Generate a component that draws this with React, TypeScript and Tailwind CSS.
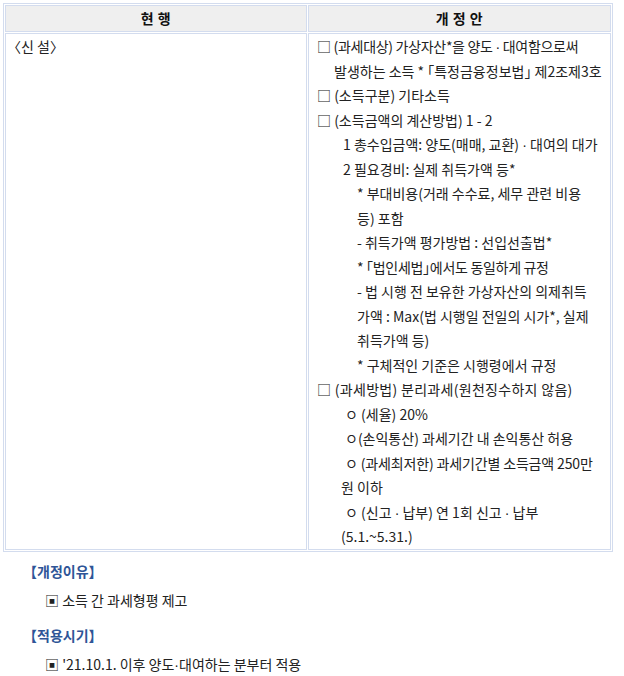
import React from "react";

// half-width punctuation so 「」〈〉【】 sit tight like the source document
function P({ c }: { c: string }) {
  return <span className="[font-feature-settings:'halt']">{c}</span>;
}

function Dot() {
  return <span className="font-['Liberation_Sans',sans-serif] leading-none">·</span>;
}

const lines: { node: React.ReactNode; indent: number; track?: string }[] = [
  { node: <>□ (과세대상) 가상자산*을 양도 <Dot /> 대여함으로써</>, indent: 0, track: "tracking-[-0.3px]" },
  { node: <>발생하는 소득 * <P c="「" />특정금융정보법<P c="」" /> 제2조제3호</>, indent: 17 },
  { node: "□ (소득구분) 기타소득", indent: 0 },
  { node: "□ (소득금액의 계산방법) 1 - 2", indent: 0 },
  { node: <>1 총수입금액: 양도(매매, 교환) <Dot /> 대여의 대가</>, indent: 26 },
  { node: "2 필요경비: 실제 취득가액 등*", indent: 26 },
  { node: "* 부대비용(거래 수수료, 세무 관련 비용", indent: 40 },
  { node: "등) 포함", indent: 40 },
  { node: "- 취득가액 평가방법 : 선입선출법*", indent: 40 },
  { node: <>* <P c="「" />법인세법<P c="」" />에서도 동일하게 규정</>, indent: 40, track: "tracking-[-0.3px]" },
  { node: "- 법 시행 전 보유한 가상자산의 의제취득", indent: 40 },
  { node: "가액 : Max(법 시행일 전일의 시가*, 실제", indent: 40 },
  { node: "취득가액 등)", indent: 40 },
  { node: "* 구체적인 기준은 시행령에서 규정", indent: 40 },
  { node: "□ (과세방법) 분리과세(원천징수하지 않음)", indent: 0, track: "tracking-[0.3px]" },
  { node: "ㅇ (세율) 20%", indent: 28 },
  { node: "ㅇ(손익통산) 과세기간 내 손익통산 허용", indent: 28 },
  { node: "ㅇ (과세최저한) 과세기간별 소득금액 250만", indent: 28, track: "tracking-[-0.15px]" },
  { node: "원 이하", indent: 24 },
  { node: <>ㅇ (신고 <Dot /> 납부) 연 1회 신고 <Dot /> 납부</>, indent: 28 },
  { node: "(5.1.~5.31.)", indent: 24 },
];

export default function App() {
  return (
    <div className="min-h-screen bg-white text-[#222] font-['Noto_Sans_CJK_KR',sans-serif] text-[14px]">
      <table className="ml-[3px] mt-[3px] w-[610px] border border-[#d3dcee] border-separate border-spacing-[1px]">
        <thead>
          <tr>
            <th className="h-[27px] w-[302px] border border-[#d3dcee] bg-[#efefef] p-0 font-bold text-[14px] text-[#111] tracking-[0.5px]">
              현 행
            </th>
            <th className="h-[27px] border border-[#d3dcee] bg-[#efefef] p-0 font-bold text-[14px] text-[#111] tracking-[0.5px]">
              개 정 안
            </th>
          </tr>
        </thead>
        <tbody>
          <tr>
            <td className="h-[514px] align-top border border-[#d3dcee] pl-[8px] leading-[24.5px]">
              <P c="〈" />신 설<P c="〉" />
            </td>
            <td className="align-top border border-[#d3dcee] pl-[8px] leading-[24.5px]">
              {lines.map((l, i) => (
                <div
                  key={i}
                  className={`h-[24.5px] whitespace-nowrap ${l.track ?? ""}`}
                  style={{ paddingLeft: l.indent }}
                >
                  {l.node}
                </div>
              ))}
            </td>
          </tr>
        </tbody>
      </table>

      <div className="ml-[30px] mt-[5px] leading-[29px] text-[14px]">
        <div className="font-bold text-[#2f5597]">
          <P c="【" />개정이유<P c="】" />
        </div>
        <div className="ml-[15px]">▣ 소득 간 과세형평 제고</div>
        <div className="mt-[6px] font-bold text-[#2f5597]">
          <P c="【" />적용시기<P c="】" />
        </div>
        <div className="ml-[15px]">
          ▣ '21.10.1. 이후 양도<Dot />대여하는 분부터 적용
        </div>
      </div>
    </div>
  );
}
